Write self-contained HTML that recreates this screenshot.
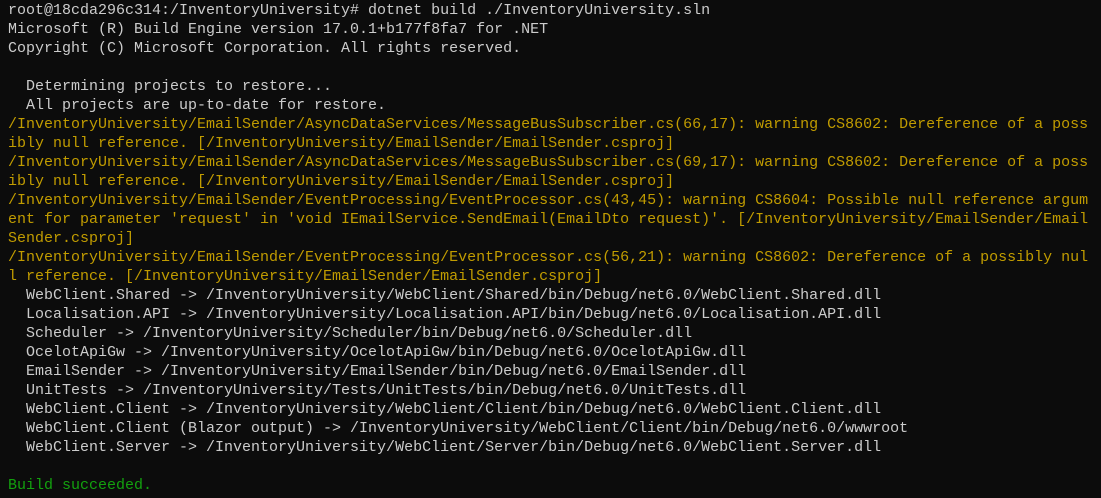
<!DOCTYPE html>
<html><head><meta charset="utf-8"><style>
html,body{margin:0;padding:0;background:#0c0c0c;width:1101px;height:498px;overflow:hidden}
pre{margin:0;padding:1px 0 0 8px;font-family:"Liberation Mono",monospace;font-size:15px;line-height:19px;color:#cccccc;white-space:pre}
.y{color:#c19c00}.g{color:#13a10e}
</style></head><body><pre>root@18cda296c314:/InventoryUniversity# dotnet build ./InventoryUniversity.sln
Microsoft (R) Build Engine version 17.0.1+b177f8fa7 for .NET
Copyright (C) Microsoft Corporation. All rights reserved.

  Determining projects to restore...
  All projects are up-to-date for restore.
<span class="y">/InventoryUniversity/EmailSender/AsyncDataServices/MessageBusSubscriber.cs(66,17): warning CS8602: Dereference of a poss
ibly null reference. [/InventoryUniversity/EmailSender/EmailSender.csproj]
/InventoryUniversity/EmailSender/AsyncDataServices/MessageBusSubscriber.cs(69,17): warning CS8602: Dereference of a poss
ibly null reference. [/InventoryUniversity/EmailSender/EmailSender.csproj]
/InventoryUniversity/EmailSender/EventProcessing/EventProcessor.cs(43,45): warning CS8604: Possible null reference argum
ent for parameter 'request' in 'void IEmailService.SendEmail(EmailDto request)'. [/InventoryUniversity/EmailSender/Email
Sender.csproj]
/InventoryUniversity/EmailSender/EventProcessing/EventProcessor.cs(56,21): warning CS8602: Dereference of a possibly nul
l reference. [/InventoryUniversity/EmailSender/EmailSender.csproj]</span>
  WebClient.Shared -&gt; /InventoryUniversity/WebClient/Shared/bin/Debug/net6.0/WebClient.Shared.dll
  Localisation.API -&gt; /InventoryUniversity/Localisation.API/bin/Debug/net6.0/Localisation.API.dll
  Scheduler -&gt; /InventoryUniversity/Scheduler/bin/Debug/net6.0/Scheduler.dll
  OcelotApiGw -&gt; /InventoryUniversity/OcelotApiGw/bin/Debug/net6.0/OcelotApiGw.dll
  EmailSender -&gt; /InventoryUniversity/EmailSender/bin/Debug/net6.0/EmailSender.dll
  UnitTests -&gt; /InventoryUniversity/Tests/UnitTests/bin/Debug/net6.0/UnitTests.dll
  WebClient.Client -&gt; /InventoryUniversity/WebClient/Client/bin/Debug/net6.0/WebClient.Client.dll
  WebClient.Client (Blazor output) -&gt; /InventoryUniversity/WebClient/Client/bin/Debug/net6.0/wwwroot
  WebClient.Server -&gt; /InventoryUniversity/WebClient/Server/bin/Debug/net6.0/WebClient.Server.dll

<span class="g">Build succeeded.</span>
</pre></body></html>
